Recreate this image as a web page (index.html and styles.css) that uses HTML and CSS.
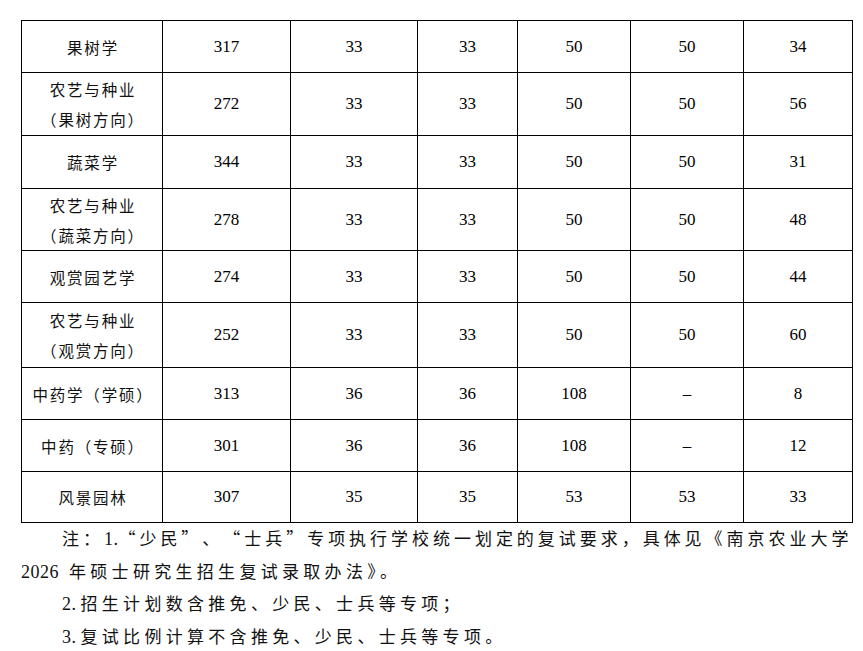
FILE: index.html
```html
<!DOCTYPE html>
<html lang="zh-CN">
<head>
<meta charset="utf-8">
<title>复试分数线</title>
<link rel="stylesheet" href="styles.css">
</head>
<body>
<div class="page">
  <table class="grid">
    <colgroup>
      <col class="c1"><col class="c2"><col class="c3"><col class="c4"><col class="c5"><col class="c6"><col class="c7">
    </colgroup>
    <tr class="h52"><td class="name">果树学</td><td>317</td><td>33</td><td>33</td><td>50</td><td>50</td><td>34</td></tr>
    <tr class="h63"><td class="name two">农艺与种业<br>（果树方向）</td><td>272</td><td>33</td><td>33</td><td>50</td><td>50</td><td>56</td></tr>
    <tr class="h53"><td class="name">蔬菜学</td><td>344</td><td>33</td><td>33</td><td>50</td><td>50</td><td>31</td></tr>
    <tr class="h62"><td class="name two">农艺与种业<br>（蔬菜方向）</td><td>278</td><td>33</td><td>33</td><td>50</td><td>50</td><td>48</td></tr>
    <tr class="h52"><td class="name">观赏园艺学</td><td>274</td><td>33</td><td>33</td><td>50</td><td>50</td><td>44</td></tr>
    <tr class="h64"><td class="name two">农艺与种业<br>（观赏方向）</td><td>252</td><td>33</td><td>33</td><td>50</td><td>50</td><td>60</td></tr>
    <tr class="h52"><td class="name">中药学（学硕）</td><td>313</td><td>36</td><td>36</td><td>108</td><td>–</td><td>8</td></tr>
    <tr class="h52"><td class="name">中药（专硕）</td><td>301</td><td>36</td><td>36</td><td>108</td><td>–</td><td>12</td></tr>
    <tr class="h51"><td class="name">风景园林</td><td>307</td><td>35</td><td>35</td><td>53</td><td>53</td><td>33</td></tr>
  </table>
  <div class="notes">
    <div class="line first">注：<span class="num">1.</span><span class="qo">“</span>少民<span class="qc">”</span>、<span class="qo">“</span>士兵<span class="qc">”</span>专项执行学校统一划定的复试要求，具体见《南京农业大学</div>
    <div class="line wide"><span class="num year">2026</span>年硕士研究生招生复试录取办法》。</div>
    <div class="line wide indent"><span class="num pt">2.</span>招生计划数含推免、少民、士兵等专项；</div>
    <div class="line wide indent"><span class="num pt">3.</span>复试比例计算不含推免、少民、士兵等专项。</div>
  </div>
</div>
</body>
</html>
```

FILE: styles.css
```css
html, body {
  margin: 0;
  padding: 0;
  background: #ffffff;
}

.page {
  padding: 20px 0 0 21px;
  width: 831px;
  color: #000000;
}

.grid {
  border-collapse: collapse;
  table-layout: fixed;
  width: 831px;
}

.c1 { width: 141px; }
.c2 { width: 128px; }
.c3 { width: 127px; }
.c4 { width: 100px; }
.c5 { width: 113px; }
.c6 { width: 113px; }
.c7 { width: 109px; }

.grid td {
  border: 1px solid #000000;
  padding: 0;
  text-align: center;
  vertical-align: middle;
  font-family: "Liberation Serif", "Noto Sans CJK SC", serif;
  font-size: 17px;
  line-height: 20px;
}

.grid td.name {
  font-family: "Noto Sans CJK SC", sans-serif;
  font-size: 15.5px;
  letter-spacing: 1.8px;
  padding-left: 2px;
  color: #111111;
}

.grid td.two {
  line-height: 30px;
}

.h51 { height: 51px; }
.h52 { height: 52px; }
.h53 { height: 53px; }
.h62 { height: 62px; }
.h63 { height: 63px; }
.h64 { height: 65px; }

.notes {
  width: 831px;
  margin-top: -1px;
  font-family: "Noto Sans CJK SC", sans-serif;
  font-size: 17px;
  letter-spacing: 3.6px;
  line-height: 32.5px;
  color: #111111;
}

.line {
  white-space: nowrap;
  height: 32.5px;
}

.line.wide {
  letter-spacing: 4.3px;
}

.line.first {
  text-indent: 41px;
  text-align: justify;
  text-align-last: justify;
  white-space: normal;
}

.line.indent {
  padding-left: 41px;
}

.num {
  font-family: "Liberation Serif", serif;
  font-size: 18px;
  letter-spacing: 0.5px;
  line-height: 1;
}

.num.year {
  margin-right: 10px;
}

.num.pt {
  margin-right: 4px;
}

.qo, .qc {
  display: inline-block;
  width: 17px;
  letter-spacing: 0;
  text-indent: 0;
  line-height: 1;
}

.qo {
  text-align: right;
  margin-right: 3.6px;
}

.qc {
  text-align: left;
  margin-right: 3.6px;
}
```
